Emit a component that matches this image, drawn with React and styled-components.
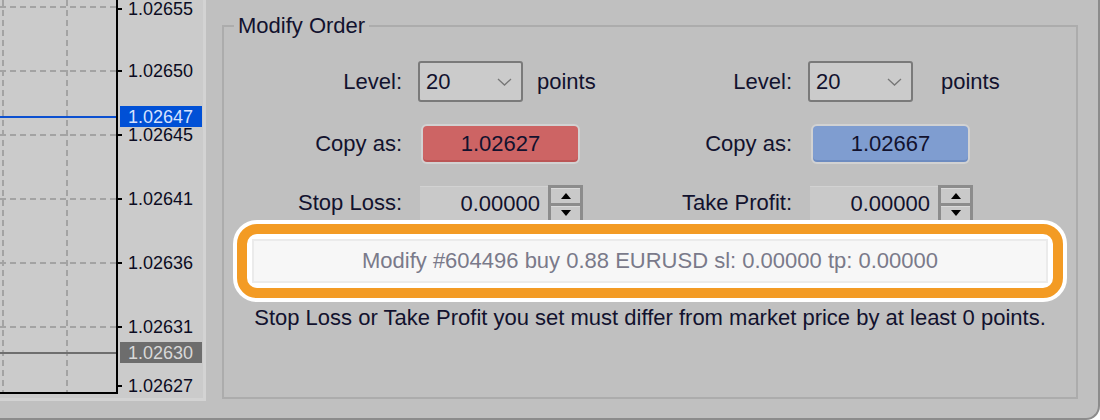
import React from 'react';
import styled, { createGlobalStyle } from 'styled-components';

const GlobalStyle = createGlobalStyle`
  html, body {
    margin: 0;
    padding: 0;
    background: #ffffff;
  }
  body {
    width: 1100px;
    height: 420px;
    overflow: hidden;
    font-family: "Liberation Sans", Arial, sans-serif;
    color: #12122e;
  }
`;

const Window = styled.div`
  width: 1098px;
  height: 418px;
  background: #c0c0c0;
  border-right: 2px solid #8c8c8c;
  border-bottom: 2px solid #8c8c8c;
  border-bottom-right-radius: 14px;
  display: flex;
  align-items: flex-start;
  overflow: hidden;
`;

/* ---------- chart ---------- */

const ChartPanel = styled.div`
  width: 203px;
  height: 398px;
  flex-shrink: 0;
  display: flex;
  align-items: flex-start;
  background: #cbcbcb;
  border-right: 3px solid #d3d3d3;
  border-bottom: 3px solid #d3d3d3;
`;

const Plot = styled.svg`
  display: block;
  flex-shrink: 0;
  border-right: 2px solid #000;
  border-bottom: 2px solid #000;
`;

const Scale = styled.div`
  position: relative;
  flex: 1;
  height: 394px;
  font-size: 18px;
  line-height: 18px;
  color: #0c0c22;
`;

const PriceTag = styled.div`
  position: absolute;
  left: 0;
  top: ${p => p.$y - 9}px;
  height: 18px;
  display: flex;
  align-items: center;

  &::before {
    content: '';
    width: 4px;
    height: 2px;
    background: #000;
    margin-right: 6px;
  }
`;

const CurrentTag = styled.div`
  position: absolute;
  left: 2px;
  top: ${p => p.$y - 11}px;
  width: 82px;
  height: 21px;
  padding-left: 8px;
  box-sizing: border-box;
  display: flex;
  align-items: center;
  background: ${p => p.$bg};
  color: ${p => p.$fg};
`;

/* ---------- dialog ---------- */

const GroupBox = styled.fieldset`
  margin: 14px 0 0 16px;
  padding: 0;
  width: 856px;
  height: 385px;
  box-sizing: border-box;
  border: 2px solid #acacac;
  font-size: 22px;
  line-height: 24px;
`;

const Legend = styled.legend`
  margin-left: 10px;
  padding: 0 4px;
`;

const FormGrid = styled.div`
  display: grid;
  grid-template-columns: 390px 390px;
  padding-top: 23px;
`;

const FieldGroup = styled.div`
  display: grid;
  grid-template-columns: 178px 1fr;
  column-gap: 16px;
  row-gap: 22px;
  align-items: center;
`;

const Label = styled.div`
  text-align: right;
  white-space: nowrap;
`;

const Control = styled.div`
  display: flex;
  align-items: center;
`;

const Select = styled.div`
  width: 105px;
  height: 41px;
  box-sizing: border-box;
  border: 2px solid #7a7a7a;
  border-radius: 3px;
  background: #cbcbcb;
  padding: 0 9px 0 6px;
  display: flex;
  align-items: center;
  justify-content: space-between;
`;

const Unit = styled.span`
  margin-left: ${p => p.$gap}px;
`;

const CopyButton = styled.div`
  width: 159px;
  height: 40px;
  margin-left: 3px;
  box-sizing: border-box;
  border: 2px solid #d2d2d2;
  border-radius: 6px;
  background: ${p => (p.$tone === 'sell' ? '#cd6464' : '#7f9dd0')};
  box-shadow: inset 0 -2px 0 ${p => (p.$tone === 'sell' ? '#bb5656' : '#6e8cc0')};
  display: flex;
  align-items: center;
  justify-content: center;
`;

const NumberField = styled.div`
  display: flex;
  margin-left: 2px;
`;

const NumberInput = styled.div`
  width: 128px;
  height: 34px;
  box-sizing: border-box;
  background: #c9c9c9;
  border-top: 1px solid #d2d2d2;
  padding-right: 8px;
  display: flex;
  align-items: center;
  justify-content: flex-end;
`;

const Spinner = styled.div`
  width: 35px;
  height: 35px;
  margin-top: -1px;
  box-sizing: border-box;
  border: 3px solid #8c8c8c;
  border-bottom: none;
  background: #8c8c8c;
  display: grid;
  grid-template-rows: 1fr 1fr;
  row-gap: 3px;
`;

const SpinButton = styled.div`
  background: #c9c9c9;
  border-top: 1px solid #dadada;
  display: flex;
  align-items: center;
  justify-content: center;
`;

const Highlight = styled.div`
  margin: 4px 13px 0;
  border: 10px solid #f39b24;
  border-radius: 20px;
  background: #ffffff;
  padding: 5px;
  box-shadow: 0 0 0 4px #ffffff;
`;

const CommandBox = styled.div`
  height: 44px;
  box-sizing: border-box;
  background: #f7f7f7;
  border: 2px solid #ebebeb;
  color: #7a7a8a;
  display: flex;
  align-items: center;
  justify-content: center;
`;

const Message = styled.div`
  margin-top: 8px;
  text-align: center;
`;

const Chevron = () => (
  <svg width="15" height="8" viewBox="0 0 15 8">
    <path d="M1 1 L7.5 7 L14 1" fill="none" stroke="#777" strokeWidth="1.3" />
  </svg>
);

const Arrow = ({ down }) => (
  <svg width="10" height="6" viewBox="0 0 10 6">
    <path d={down ? 'M0 0 H10 L5 6 Z' : 'M0 6 H10 L5 0 Z'} fill="#000" />
  </svg>
);

const gridY = [7, 71, 135, 199, 263, 327];
const prices = [
  { y: 9, label: '1.02655' },
  { y: 71, label: '1.02650' },
  { y: 135, label: '1.02645' },
  { y: 199, label: '1.02641' },
  { y: 263, label: '1.02636' },
  { y: 327, label: '1.02631' },
  { y: 386, label: '1.02627' },
];

const Chart = () => (
  <ChartPanel>
    <Plot width="116" height="392" viewBox="0 0 116 392">
      {[3, 67].map(x => (
        <line key={x} x1={x} y1="0" x2={x} y2="392" stroke="#a3a3a3" strokeWidth="2" strokeDasharray="6 4" />
      ))}
      {gridY.map(y => (
        <line key={y} x1="0" y1={y} x2="116" y2={y} stroke="#a3a3a3" strokeWidth="2" strokeDasharray="6 4" />
      ))}
      <line x1="0" y1="117" x2="116" y2="117" stroke="#0c50d0" strokeWidth="2" />
      <line x1="0" y1="353" x2="116" y2="353" stroke="#6e6e6e" strokeWidth="2" />
    </Plot>
    <Scale>
      {prices.map(p => (
        <PriceTag key={p.label} $y={p.y}>{p.label}</PriceTag>
      ))}
      <CurrentTag $y={117} $bg="#0050d6" $fg="#d6e2ff">1.02647</CurrentTag>
      <CurrentTag $y={353} $bg="#6d6d6d" $fg="#d8d8d8">1.02630</CurrentTag>
    </Scale>
  </ChartPanel>
);

const Side = ({ unitGap, price, tone, stopLabel }) => (
  <FieldGroup>
    <Label>Level:</Label>
    <Control>
      <Select>
        <span>20</span>
        <Chevron />
      </Select>
      <Unit $gap={unitGap}>points</Unit>
    </Control>

    <Label>Copy as:</Label>
    <Control>
      <CopyButton $tone={tone}>{price}</CopyButton>
    </Control>

    <Label>{stopLabel}</Label>
    <Control>
      <NumberField>
        <NumberInput>0.00000</NumberInput>
        <Spinner>
          <SpinButton><Arrow /></SpinButton>
          <SpinButton><Arrow down /></SpinButton>
        </Spinner>
      </NumberField>
    </Control>
  </FieldGroup>
);

export default function App() {
  return (
    <>
      <GlobalStyle />
      <Window>
        <Chart />
        <GroupBox>
          <Legend>Modify Order</Legend>
          <FormGrid>
            <Side unitGap={14} price="1.02627" tone="sell" stopLabel="Stop Loss:" />
            <Side unitGap={28} price="1.02667" tone="buy" stopLabel="Take Profit:" />
          </FormGrid>
          <Highlight>
            <CommandBox>Modify #604496 buy 0.88 EURUSD sl: 0.00000 tp: 0.00000</CommandBox>
          </Highlight>
          <Message>
            Stop Loss or Take Profit you set must differ from market price by at least 0 points.
          </Message>
        </GroupBox>
      </Window>
    </>
  );
}
